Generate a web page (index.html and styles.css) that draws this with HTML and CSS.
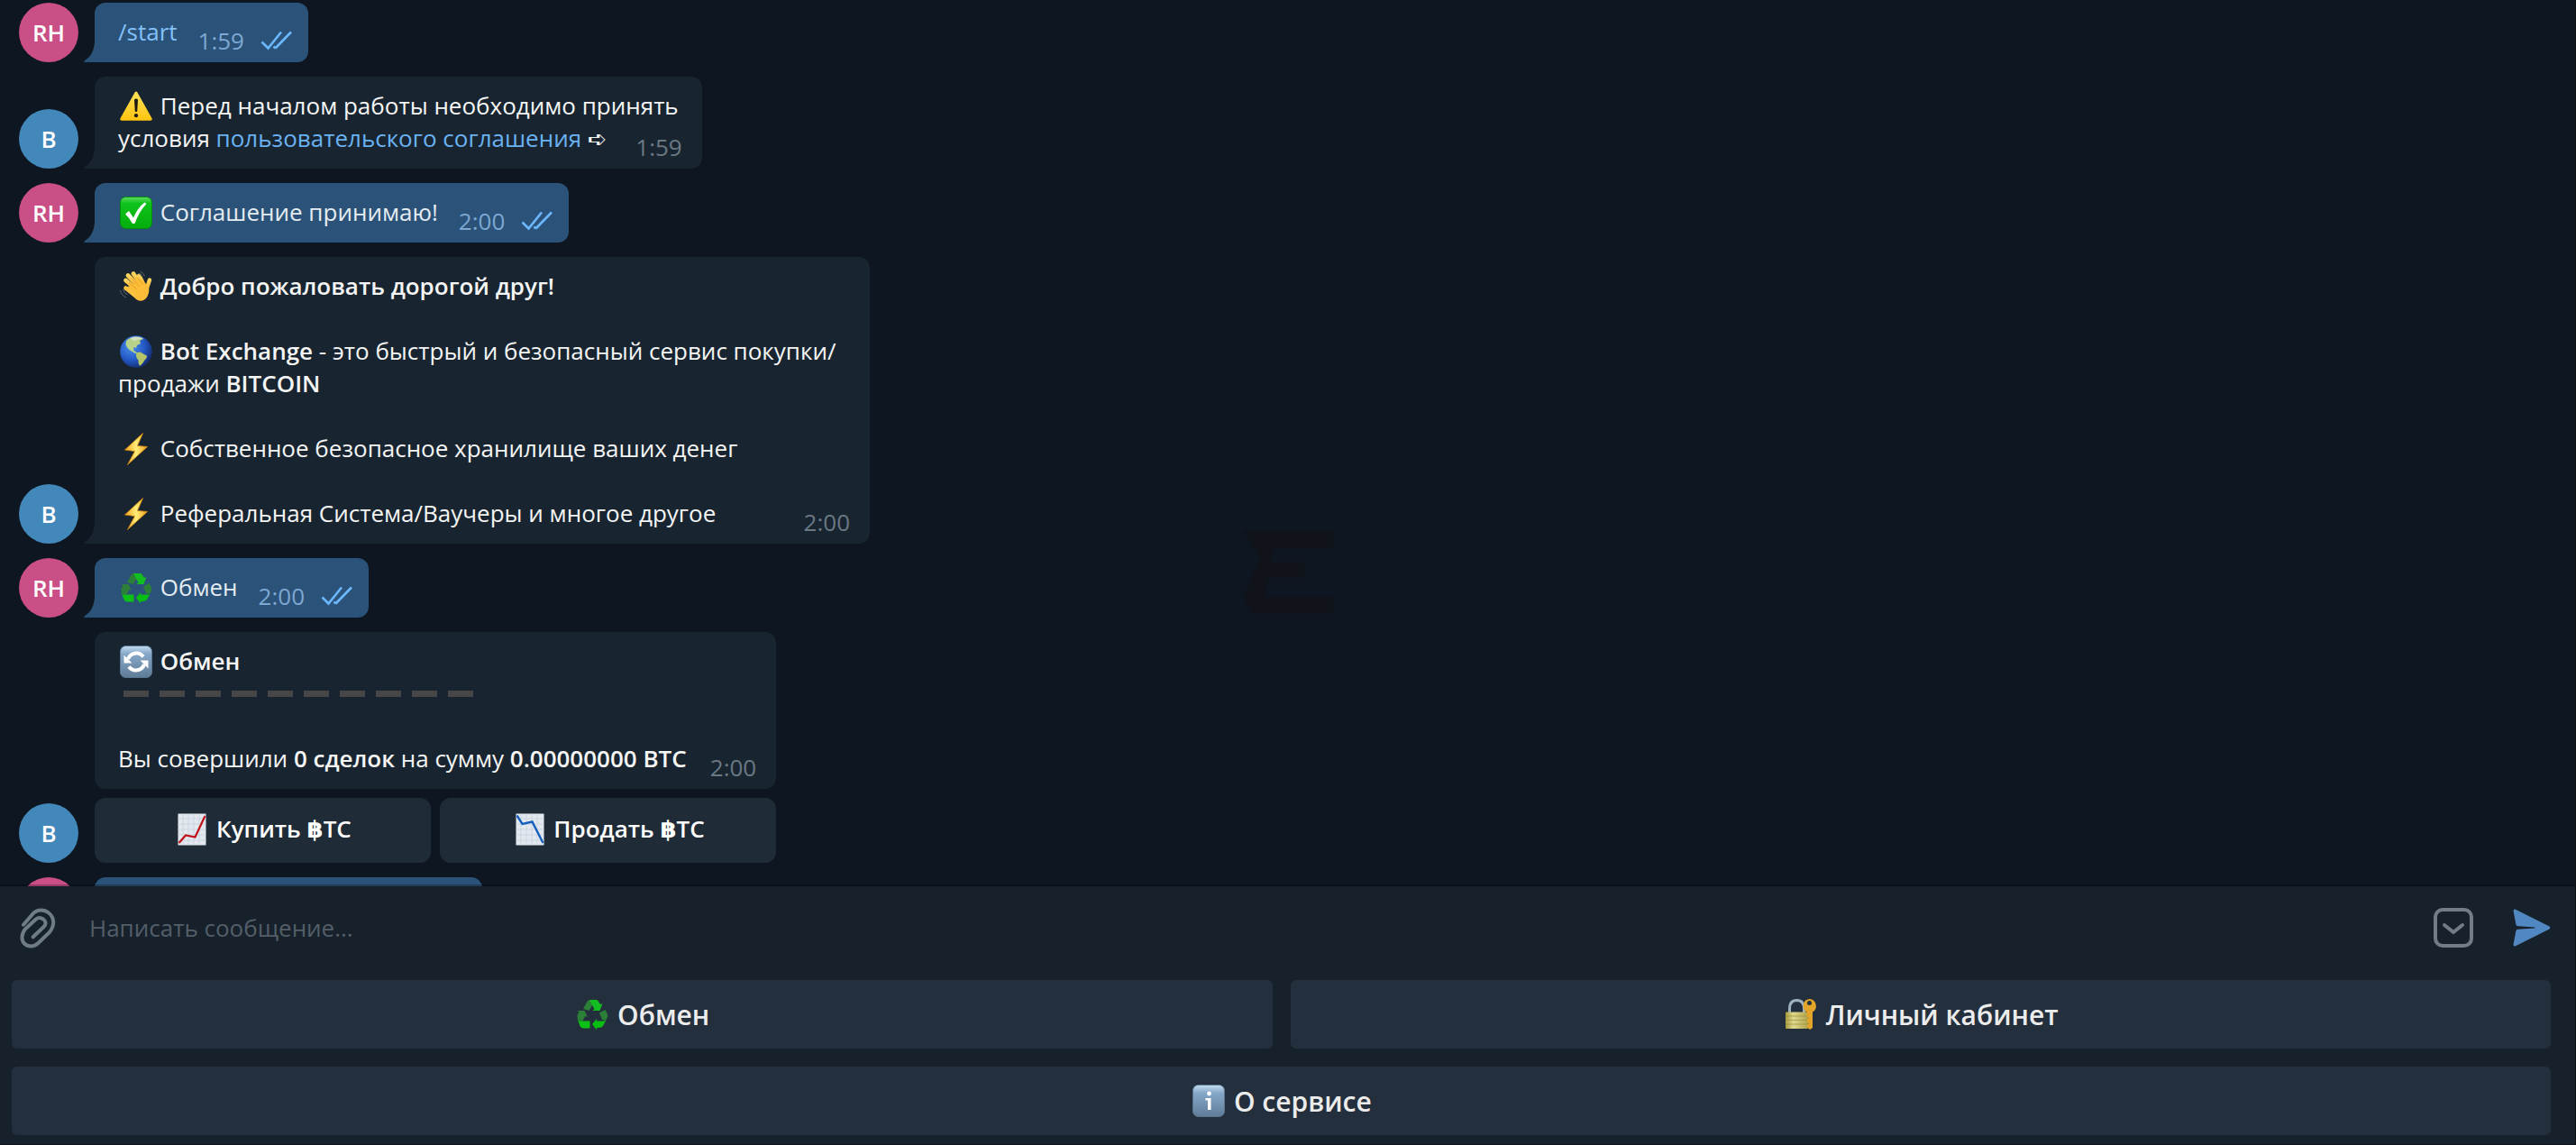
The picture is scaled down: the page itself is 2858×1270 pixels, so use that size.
FILE: index.html
```html
<!DOCTYPE html>
<html lang="ru">
<head>
  <meta charset="UTF-8" />
  <meta name="viewport" content="width=device-width, initial-scale=1.0" />
  <title>Bot Exchange</title>
  <link rel="stylesheet" href="styles.css">
</head>
<body>
  <!-- emoji set -->
  <svg class="defs" aria-hidden="true">
    <defs>
      <linearGradient id="gYellow" x1="0" y1="0" x2="0" y2="1"><stop offset="0" stop-color="#ffe25a"/><stop offset="1" stop-color="#fdc40f"/></linearGradient>
      <linearGradient id="gGreen" x1="0" y1="0" x2="0" y2="1"><stop offset="0" stop-color="#5fdc62"/><stop offset=".2" stop-color="#10c31c"/><stop offset="1" stop-color="#04ad0b"/></linearGradient>
      <linearGradient id="gSteel" x1="0" y1="0" x2="0" y2="1"><stop offset="0" stop-color="#c3dcf0"/><stop offset=".25" stop-color="#86a8c8"/><stop offset="1" stop-color="#5f7c98"/></linearGradient>
      <radialGradient id="gSea" cx=".35" cy=".35" r=".7"><stop offset="0" stop-color="#4a90ea"/><stop offset=".6" stop-color="#2358c4"/><stop offset="1" stop-color="#152c70"/></radialGradient>
      <linearGradient id="gHand" x1="0" y1="0" x2="0" y2="1"><stop offset="0" stop-color="#ffd45c"/><stop offset="1" stop-color="#f9b32c"/></linearGradient>
      <linearGradient id="gBolt" x1="0" y1="0" x2="1" y2="0"><stop offset="0" stop-color="#f6a21c"/><stop offset=".5" stop-color="#ffee7a"/><stop offset="1" stop-color="#f2a01a"/></linearGradient>
      <linearGradient id="gLock" x1="0" y1="0" x2="1" y2="0"><stop offset="0" stop-color="#a99a3c"/><stop offset=".35" stop-color="#ded98d"/><stop offset="1" stop-color="#b0a24a"/></linearGradient>
    </defs>
    <symbol id="e-warning" viewBox="0 0 36 36">
      <path d="M16.6 2.6Q18 .4 19.4 2.6L35.4 31Q36.4 33.6 34 33.8H2Q-.4 33.6 .6 31Z" fill="url(#gYellow)"/>
      <path d="M16 10.4Q18 8.8 20 10.4L19.2 23.6Q18 24.6 16.8 23.6Z" fill="#1d1a10"/>
      <circle cx="18" cy="28.2" r="2.1" fill="#1d1a10"/>
    </symbol>
    <symbol id="e-check" viewBox="0 0 36 36">
      <rect x=".5" y=".5" width="35" height="35" rx="6" fill="url(#gGreen)" stroke="#068a10"/>
      <path d="M6 19.5L10 16L15 23.5Q20 12 27.5 6.5L29.5 8Q21 17 16.5 30H14Q11 24 6 19.5Z" fill="#fff"/>
    </symbol>
    <symbol id="e-wave" viewBox="0 0 36 36">
      <g fill="none" stroke="url(#gHand)" stroke-linecap="round" stroke-width="4.8">
        <path d="M17 20L6.5 11"/><path d="M20 17L9 5.5"/><path d="M23 15L15 3.5"/><path d="M26 15L21.5 6"/><path d="M29.5 21L33 10.5" stroke-width="4.4"/>
      </g>
      <path d="M10.5 17.5L24 11.5Q29 14 30.4 17L32 18Q33.5 26 28.5 31.5Q23 36 17.5 31.5Q12 26 6.5 20Q7.5 17 10.5 17.5Z" fill="#fcbd38"/>
      <path d="M6.5 19.5L16 27" stroke="#fcc240" stroke-width="4.6" stroke-linecap="round"/>
      <path d="M10 13.5L19 21M13 8.5L22 18M19 7.5L26 16" stroke="#e39a1e" stroke-width=".8" fill="none"/>
      <path d="M.5 22Q1.5 27.5 7 30M3.5 21Q4.5 25 8.5 27M22.5 1Q26 2.5 27.5 6.5M20.5 3Q23 4.5 24.5 7" fill="none" stroke="#5f6970" stroke-width="1"/>
    </symbol>
    <symbol id="e-globe" viewBox="0 0 36 36">
      <circle cx="18" cy="18" r="17.8" fill="url(#gSea)"/>
      <path d="M7 6Q12 1 20 1.5Q25 2 26 4L22 6L23 9L19 11L18 14L15 13L15.5 17L19 19L18 20.5L13 17.5Q8 15 6.5 10Z" fill="#b9d28a"/>
      <path d="M18.5 19.5Q22 17.5 25 20L30 22.5Q30.5 25 27.5 27.5Q25 32 22 34Q20 31 20.5 27.5Q17 24 18.5 19.5Z" fill="#b4c668"/>
      <path d="M11 3Q18 0 26 3.5Q20 4 17 6Q13 5 11 3Z" fill="#e4ecee" opacity=".6"/>
    </symbol>
    <symbol id="e-bolt" viewBox="0 0 36 36">
      <path d="M25.5 .5L5.5 19L16.5 20.5L8.5 35.5L30.5 15.5L19.5 14.5Z" fill="url(#gBolt)" stroke="#d98a10" stroke-width=".8"/>
    </symbol>
    <symbol id="e-recycle" viewBox="0 0 36 36">
      <path d="M8 12L12 4.5Q13.5 2 16 2L19 7L14.5 14Z" fill="#2b7f36"/>
      <path d="M15 2H23Q24.5 2.5 25.5 4.5L27 7L29.5 6L26.5 14H18L20.5 12.5Z" fill="#12bd1f"/>
      <path d="M26 16.5L32.5 13L35 18Q36 20.5 34.5 22.5L32.5 25L29 24Z" fill="#2b7f36"/>
      <path d="M33.5 24.5L30 31Q28.5 33 25.5 33H23V35.5L18 29L23 23V25.5H32Z" fill="#09bd12"/>
      <path d="M1.5 14H9.5L13 21L10.5 20L7 26L3 25Q.5 21 2 18L3.5 15.5Z" fill="#2b7f36"/>
      <path d="M1.5 23L3.5 25.5H15.5V33.5H8Q5.5 33 4.5 31Z" fill="#0cc016"/>
    </symbol>
    <symbol id="e-sync" viewBox="0 0 36 36">
      <rect x=".5" y=".5" width="35" height="35" rx="6" fill="url(#gSteel)" stroke="#5a7590"/>
      <path d="M9 15A9.8 9.8 0 0 1 26 12.5M27 21A9.8 9.8 0 0 1 10 23.500" fill="none" stroke="#fff" stroke-width="4"/>
      <path d="M4.5 10.5V19.5H13.500Z M31.5 25.500V16.500H22.500Z" fill="#fff"/>
    </symbol>
    <symbol id="e-dash" viewBox="0 0 36 36"><rect x="4" y="14" width="28" height="7" fill="#474747"/></symbol>
    <symbol id="e-up" viewBox="0 0 36 36">
      <rect x="2.5" y=".5" width="31" height="35" fill="#e2e8ee"/>
      <path d="M2.5 6H33.5M2.5 12H33.5M2.5 18H33.5M2.5 24H33.5M2.5 30H33.5M8 .5V35.5M14 .5V35.5M20 .5V35.5M26 .5V35.5" stroke="#c6d2dc" stroke-width=".8"/>
      <path d="M3.5 33L11 24.5L21.5 26.5L32.5 3" fill="none" stroke="#c01218" stroke-width="2.2"/>
    </symbol>
    <symbol id="e-down" viewBox="0 0 36 36">
      <rect x="2.5" y=".5" width="31" height="35" fill="#e2e8ee"/>
      <path d="M2.5 6H33.5M2.5 12H33.5M2.5 18H33.5M2.5 24H33.5M2.5 30H33.5M8 .5V35.5M14 .5V35.5M20 .5V35.5M26 .5V35.5" stroke="#c6d2dc" stroke-width=".8"/>
      <path d="M3.5 2.5L9.5 12L20.5 9.5L32.5 33" fill="none" stroke="#1660bd" stroke-width="2.4"/>
    </symbol>
    <symbol id="e-lock" viewBox="0 0 36 36">
      <path d="M5.5 17V12Q5.5 2.5 13.5 2.5Q21.5 2.5 21.5 12V17" fill="none" stroke="#9fb0bf" stroke-width="3"/>
      <rect x="1" y="15.5" width="25" height="18.5" rx="1" fill="url(#gLock)"/>
      <path d="M1 20H26M1 24.5H26M1 29H26" stroke="#9c9140" stroke-width=".7"/>
      <path d="M27.5 1A7.8 7.8 0 0 1 31 15.5V33L28 35L25 32.5V30L26.5 28.5L25 26.5V24L26.5 22L24.5 20V15.5A7.8 7.8 0 0 1 27.5 1Z" fill="#e3a529"/>
      <circle cx="27.5" cy="5.5" r="2.5" fill="#242f3d"/>
    </symbol>
    <symbol id="e-info" viewBox="0 0 36 36">
      <rect x=".5" y=".5" width="35" height="35" rx="6" fill="url(#gSteel)" stroke="#5a7590"/>
      <circle cx="18.5" cy="10" r="2.4" fill="#fff"/>
      <path d="M14.5 15H20.5V28H17V17.5H14.5Z" fill="#fff"/>
    </symbol>
    <symbol id="i-read" viewBox="0 0 36 22">
      <path d="M1.5 12.5L8.5 19.5L23 1.5M16.5 19.5L34 1.5M16.5 19.5L14.5 17.5" fill="none" stroke="#6cb8ff" stroke-width="2.6"/>
    </symbol>
  </svg>

  <main class="chat">
    <div class="row">
      <div class="avatar pink">RH</div>
      <div class="bubble out tail">
        <div class="last">
          <a class="link" href="#">/start</a>
          <span class="meta">1:59 <svg class="read"><use href="#i-read"/></svg></span>
        </div>
      </div>
    </div>

    <div class="row">
      <div class="avatar blue">B</div>
      <div class="bubble in tail">
        <div><svg class="emoji"><use href="#e-warning"/></svg> Перед началом работы необходимо принять</div>
        <div class="last">
          <span>условия <a class="link" href="#">пользовательского соглашения</a> <span class="arrow">➪</span></span>
          <span class="meta">1:59</span>
        </div>
      </div>
    </div>

    <div class="row">
      <div class="avatar pink">RH</div>
      <div class="bubble out tail">
        <div class="last">
          <span><svg class="emoji"><use href="#e-check"/></svg> Соглашение принимаю!</span>
          <span class="meta">2:00 <svg class="read"><use href="#i-read"/></svg></span>
        </div>
      </div>
    </div>

    <div class="row">
      <div class="avatar blue">B</div>
      <div class="bubble in tail">
        <p><svg class="emoji"><use href="#e-wave"/></svg> <b>Добро пожаловать дорогой друг!</b></p>
        <p><svg class="emoji"><use href="#e-globe"/></svg> <b>Bot Exchange</b> - это быстрый и безопасный сервис покупки/<wbr>продажи <b>BITCOIN</b></p>
        <p><svg class="emoji"><use href="#e-bolt"/></svg> Собственное безопасное хранилище ваших денег</p>
        <div class="last">
          <span><svg class="emoji"><use href="#e-bolt"/></svg> Реферальная Система/Ваучеры и многое другое</span>
          <span class="meta">2:00</span>
        </div>
      </div>
    </div>

    <div class="row">
      <div class="avatar pink">RH</div>
      <div class="bubble out tail">
        <div class="last">
          <span><svg class="emoji"><use href="#e-recycle"/></svg> Обмен</span>
          <span class="meta">2:00 <svg class="read"><use href="#i-read"/></svg></span>
        </div>
      </div>
    </div>

    <div class="row">
      <div class="avatar blue">B</div>
      <div class="stack">
        <div class="bubble in">
          <div><svg class="emoji"><use href="#e-sync"/></svg> <b>Обмен</b></div>
          <p class="dashes"><svg class="emoji"><use href="#e-dash"/></svg><svg class="emoji"><use href="#e-dash"/></svg><svg class="emoji"><use href="#e-dash"/></svg><svg class="emoji"><use href="#e-dash"/></svg><svg class="emoji"><use href="#e-dash"/></svg><svg class="emoji"><use href="#e-dash"/></svg><svg class="emoji"><use href="#e-dash"/></svg><svg class="emoji"><use href="#e-dash"/></svg><svg class="emoji"><use href="#e-dash"/></svg><svg class="emoji"><use href="#e-dash"/></svg></p>
          <div class="last">
            <span>Вы совершили <b>0 сделок</b> на сумму <b>0.00000000 BTC</b></span>
            <span class="meta">2:00</span>
          </div>
        </div>
        <div class="inline-keys">
          <button type="button"><svg class="emoji"><use href="#e-up"/></svg> Купить <span class="baht">฿</span>TC</button>
          <button type="button"><svg class="emoji"><use href="#e-down"/></svg> Продать <span class="baht">฿</span>TC</button>
        </div>
      </div>
    </div>

    <!-- next message, scrolled under the composer -->
    <div class="row">
      <div class="avatar pink"></div>
      <div class="bubble out next"></div>
    </div>
  </main>

  <footer class="panel">
    <form class="composer">
      <button class="icon" type="button" aria-label="Прикрепить файл">
        <svg width="40" height="46" viewBox="0 -1 40 46"><path d="M4 18.700L15.300 5.700C19.500 1.500 27 1.500 32 5.500C38.500 10.500 39 19.500 33 27L20.500 39C15.500 43.500 9 43.500 5 39.500C1.500 36 1.500 29 6 23.500L17.300 13C21 9.800 25.500 11 27.500 14C29.200 16.500 28.700 19 26.300 21.300L14.700 32.300" fill="none" stroke="#6f7b85" stroke-width="4" stroke-linecap="round"/></svg>
      </button>
      <input class="message" type="text" placeholder="Написать сообщение..." aria-label="Сообщение">
      <button class="icon" type="button" aria-label="Клавиатура бота">
        <svg width="44" height="44" viewBox="0 0 44 44" fill="none" stroke="#737c85"><rect x="2" y="2" width="40" height="40" rx="8" stroke-width="4"/><path d="M12 19L22 27L32 19" stroke-width="4" stroke-linecap="round"/></svg>
      </button>
      <button class="icon" type="submit" aria-label="Отправить">
        <svg width="42" height="42" viewBox="0 0 42 42"><path d="M3 .8L40.5 19.5Q42 21 40.5 22.5L3 41.3Q.2 42 .6 39.3L3.3 24.8Q3.8 23 5.5 22.8L24.5 21.5V20.5L5.5 19.2Q3.8 19 3.3 17.2L.6 2.8Q.2 0 3 .8Z" fill="#5288c1"/></svg>
      </button>
    </form>
    <div class="keyboard">
      <button type="button"><svg class="emoji"><use href="#e-recycle"/></svg> Обмен</button>
      <button type="button"><svg class="emoji"><use href="#e-lock"/></svg> Личный кабинет</button>
      <button class="wide" type="button"><svg class="emoji"><use href="#e-info"/></svg> О сервисе</button>
    </div>
  </footer>

  <svg class="watermark" viewBox="0 0 100 94" aria-hidden="true">
    <path d="M0 0H100V20H36L30 35H68V53H28L24 74H100V93H10L0 74L14 42L20 30L10 18Z" fill="#10141a"/>
  </svg>
</body>
</html>
```

FILE: styles.css
```css
* { box-sizing: border-box; }
body {
  margin: 0;
  height: 100vh;
  display: flex;
  flex-direction: column;
  overflow: hidden;
  position: relative;
  background: #0e1621;
  color: #f5f5f5;
  font-family: "Open Sans", "Noto Sans", sans-serif;
  font-size: 26px;
  line-height: 36px;
  border-right: 1px solid #0a0e14;
}
.defs {
  position: absolute;
  width: 0;
  height: 0;
}
b { font-weight: 600; }
p { margin: 0 0 36px; }
button {
  font-family: inherit;
  border: none;
  cursor: pointer;
}
.emoji {
  width: 36px;
  height: 36px;
  margin: 1px 2px -1px;
  vertical-align: top;
}

/* messages */
.chat {
  flex: 1;
  min-height: 0;
  overflow: hidden;
  display: flex;
  flex-direction: column;
  gap: 16px;
  padding: 3px 21px 0;
}
.row {
  display: flex;
  align-items: flex-end;
  gap: 18px;
  flex: none;
}
.avatar {
  width: 66px;
  height: 66px;
  flex: none;
  border-radius: 50%;
  line-height: 66px;
  text-align: center;
  font-weight: 600;
  color: #fff;
}
.pink { background: #c94f86; }
.blue { background: #4388bb; }
.bubble {
  position: relative;
  max-width: 860px;
  padding: 14px 26px 16px;
  border-radius: 12px;
}
.in { background: #182530; }
.out {
  background: #2b5278;
  color: #e4ecf2;
}
.tail { border-bottom-left-radius: 0; }
.tail::before {
  content: "";
  position: absolute;
  left: -12px;
  bottom: 0;
  width: 12px;
  height: 24px;
  background: inherit;
  clip-path: path("M12 0C12 10 8 18 1 22Q-1 24 2 24H12Z");
}
.last {
  display: flex;
  align-items: flex-end;
  justify-content: space-between;
  gap: 26px;
}
.out .last { gap: 23px; }
.meta {
  display: flex;
  align-items: center;
  gap: 18px;
  margin: 0 -4px -10px 0;
  color: #6b7883;
}
.out .meta {
  margin-right: -9px;
  color: #7da8d3;
}
.read {
  width: 36px;
  height: 22px;
}
.link {
  color: #6ab2f2;
  text-decoration: none;
}
.out .link { color: #83c1fa; }
.arrow {
  font-family: "DejaVu Sans", sans-serif;
  line-height: 1;
}
.baht {
  font-family: "DejaVu Sans", sans-serif;
  line-height: 1;
}
.next {
  width: 430px;
  height: 66px;
}
.inline-keys {
  display: grid;
  grid-template-columns: 1fr 1fr;
  gap: 10px;
  margin-top: 10px;
}
.inline-keys button {
  height: 72px;
  padding: 0 6px 4px;
  border-radius: 12px;
  background: #1f2c38;
  color: #fff;
  font-size: 26px;
  font-weight: 600;
  line-height: 36px;
}

/* composer and bot keyboard */
.panel {
  position: relative;
  flex: none;
  background: #17212b;
  border-bottom: 1px solid #0e141b;
  box-shadow: 0 -2px 0 rgba(0, 0, 0, 0.25);
}
.composer {
  display: flex;
  align-items: center;
  height: 104px;
  padding: 0 27px 12px 22px;
}
.icon {
  display: flex;
  padding: 0;
  background: none;
}
.message {
  flex: 1;
  margin: 0 44px 0 37px;
  padding: 0;
  border: none;
  outline: none;
  background: none;
  color: #f5f5f5;
  font: inherit;
}
.message::placeholder {
  color: #545e68;
  opacity: 1;
}
.icon + .icon { margin-left: 44px; }
.keyboard {
  display: grid;
  grid-template-columns: 1fr 1fr;
  gap: 20px;
  padding: 0 27px 10px 13px;
}
.keyboard button {
  height: 76px;
  padding: 2px 6px 0;
  border-radius: 6px;
  background: #242f3d;
  color: #ececec;
  font-size: 30px;
  font-weight: 600;
  line-height: 36px;
}
.keyboard .emoji { margin: -1px 2px 1px; }
.wide { grid-column: 1 / -1; }

.watermark {
  position: absolute;
  inset: 0;
  margin: auto;
  width: 100px;
  height: 94px;
  pointer-events: none;
}
```
